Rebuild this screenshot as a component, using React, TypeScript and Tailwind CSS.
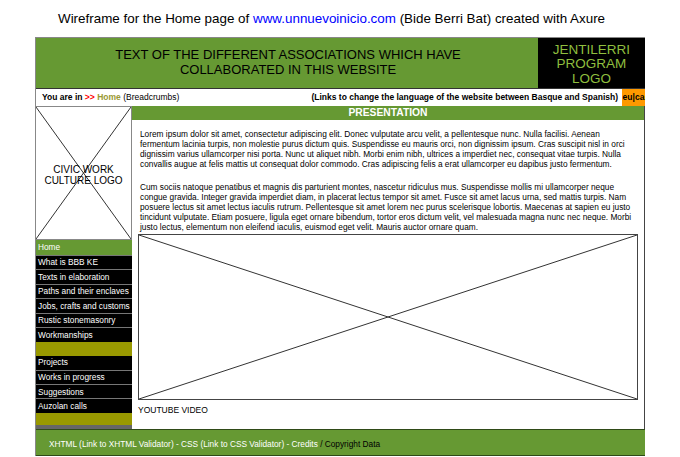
const menuTop = [
  "What is BBB KE",
  "Texts in elaboration",
  "Paths and their enclaves",
  "Jobs, crafts and customs",
  "Rustic stonemasonry",
  "Workmanships",
];

const menuBottom = ["Projects", "Works in progress", "Suggestions", "Auzolan calls"];

function CrossBox({ className }: { className?: string }) {
  return (
    <svg
      className={className}
      preserveAspectRatio="none"
      viewBox="0 0 100 100"
      width="100%"
      height="100%"
    >
      <line x1="0" y1="0" x2="100" y2="100" stroke="#333" strokeWidth="1" vectorEffect="non-scaling-stroke" />
      <line x1="100" y1="0" x2="0" y2="100" stroke="#333" strokeWidth="1" vectorEffect="non-scaling-stroke" />
    </svg>
  );
}

export default function App() {
  return (
    <div className="w-[680px] h-[457px] overflow-hidden bg-white font-['Liberation_Sans',Arial,sans-serif] text-black">
      {/* page caption */}
      <div className="h-[37px] flex items-center pl-[58px] text-[13.4px] leading-none">
        <span>
          Wireframe for the Home page of <span className="text-[#0000ff]">www.unnuevoinicio.com</span> (Bide Berri Bat)
          created with Axure
        </span>
      </div>

      <div className="ml-[35px] w-[610px] border-l border-t border-[#888]">
        {/* header */}
        <div className="flex h-[51px] border-b border-[#333]">
          <div className="flex-1 bg-[#669933] flex flex-col items-center justify-center text-[13px] leading-[15px] pb-[2px] pl-[2px]">
            <span>TEXT OF THE DIFFERENT ASSOCIATIONS WHICH HAVE</span>
            <span>COLLABORATED IN THIS WEBSITE</span>
          </div>
          <div className="w-[107px] bg-black flex flex-col items-center justify-center text-[13.5px] leading-[14.5px] text-[#8fbf3f] pt-[3px]">
            <span>JENTILERRI</span>
            <span>PROGRAM</span>
            <span>LOGO</span>
          </div>
        </div>

        {/* breadcrumbs and language bar */}
        <div className="flex h-[17px] items-center text-[8.5px] font-bold">
          <div className="pl-[6px]">
            You are in <span className="text-[#ff0000]">&gt;&gt;</span>{" "}
            <span className="text-[#999933]">Home</span> <span className="font-normal">(Breadcrumbs)</span>
          </div>
          <div className="ml-auto pr-[4px]">
            (Links to change the language of the website between Basque and Spanish)
          </div>
          <div className="w-[23px] h-full bg-[#ff9900] flex items-center justify-center">eu|ca</div>
        </div>

        {/* body */}
        <div className="flex h-[323px]">
          {/* left column */}
          <div className="w-[96px] flex flex-col">
            <div className="relative h-[134px] border border-[#888] border-l-0 bg-white">
              <CrossBox className="absolute inset-0" />
              <div className="absolute inset-0 flex flex-col items-center justify-center text-[10px] leading-[11.5px] pt-[4px]">
                <span>CIVIC WORK</span>
                <span>CULTURE LOGO</span>
              </div>
            </div>
            <div className="h-[14.5px] bg-[#669933] text-white text-[8.3px] flex items-center pl-[2px]">Home</div>
            {menuTop.map((m) => (
              <div
                key={m}
                className="h-[14.5px] bg-black border-t border-[#777] text-white text-[8.3px] flex items-center pl-[2px] whitespace-nowrap"
              >
                {m}
              </div>
            ))}
            <div className="h-[14px] bg-[#999900]" />
            {menuBottom.map((m, i) => (
              <div
                key={m}
                className={`h-[14.3px] bg-black text-white text-[8.3px] flex items-center pl-[2px] whitespace-nowrap ${
                  i > 0 ? "border-t border-[#777]" : ""
                }`}
              >
                {m}
              </div>
            ))}
            <div className="flex-1 bg-[#999900]" />
            <div className="h-[4px] bg-[#666]" />
          </div>

          {/* main column */}
          <div className="flex-1 flex flex-col border-r border-[#444]">
            <div className="h-[14px] bg-[#669933] text-white font-bold text-[10.3px] flex items-center justify-center">
              PRESENTATION
            </div>
            <div className="flex-1 flex flex-col pt-[9px]">
              <div className="pl-[8px] pr-[4px] text-[8.3px] leading-[10px] whitespace-nowrap">
                <p>
                  Lorem ipsum dolor sit amet, consectetur adipiscing elit. Donec vulputate arcu velit, a pellentesque nunc. Nulla facilisi. Aenean
                  <br />
                  fermentum lacinia turpis, non molestie purus dictum quis. Suspendisse eu mauris orci, non dignissim ipsum. Cras suscipit nisl in orci
                  <br />
                  dignissim varius ullamcorper nisi porta. Nunc ut aliquet nibh. Morbi enim nibh, ultrices a imperdiet nec, consequat vitae turpis. Nulla
                  <br />
                  convallis augue at felis mattis ut consequat dolor commodo. Cras adipiscing felis a erat ullamcorper eu dapibus justo fermentum.
                </p>
                <p className="mt-[13px]">
                  Cum sociis natoque penatibus et magnis dis parturient montes, nascetur ridiculus mus. Suspendisse mollis mi ullamcorper neque
                  <br />
                  congue gravida. Integer gravida imperdiet diam, in placerat lectus tempor sit amet. Fusce sit amet lacus urna, sed mattis turpis. Nam
                  <br />
                  posuere lectus sit amet lectus iaculis rutrum. Pellentesque sit amet lorem nec purus scelerisque lobortis. Maecenas at sapien eu justo
                  <br />
                  tincidunt vulputate. Etiam posuere, ligula eget ornare bibendum, tortor eros dictum velit, vel malesuada magna nunc nec neque. Morbi
                  <br />
                  justo lectus, elementum non eleifend iaculis, euismod eget velit. Mauris auctor ornare quam.
                </p>
              </div>
              <div className="mx-[6px] mt-[2px] h-[166px] border border-[#444] bg-white">
                <CrossBox />
              </div>
              <div className="pl-[6px] mt-[5px] text-[8.5px] leading-[10px]">YOUTUBE VIDEO</div>
            </div>
          </div>
        </div>

        {/* footer */}
        <div className="h-[27px] bg-[#669933] border-t border-b border-[#2f4a17] flex items-center pl-[13px] pt-[4px] text-[8.3px] text-white">
          <span>
            XHTML (Link to XHTML Validator) - CSS (Link to CSS Validator) - Credits{" "}
            <span className="text-black">/ Copyright Data</span>
          </span>
        </div>
      </div>
    </div>
  );
}
